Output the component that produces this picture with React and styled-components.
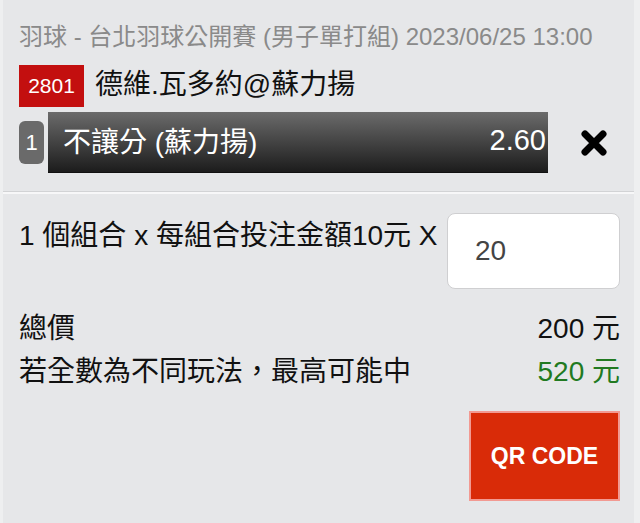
import React from "react";
import styled, { createGlobalStyle } from "styled-components";

const Global = createGlobalStyle`
  html, body {
    margin: 0;
    padding: 0;
    background: #e6e7e9;
  }
  body {
    font-family: "Liberation Sans", Arial, "Noto Sans CJK TC", sans-serif;
  }
`;

function CloseIcon() {
  return (
    <svg width="28" height="28" viewBox="0 0 28 28">
      <path
        d="M5 5 L23 23 M23 5 L5 23"
        stroke="#000"
        strokeWidth="7"
        strokeLinecap="round"
        fill="none"
      />
    </svg>
  );
}

function App() {
  return (
    <Root>
      <Global />
      <Selection>
        <Header>羽球 - 台北羽球公開賽 (男子單打組) 2023/06/25 13:00</Header>
        <MatchRow>
          <MatchNo>2801</MatchNo>
          <MatchName>德維.瓦多約@蘇力揚</MatchName>
        </MatchRow>
        <BetRow>
          <Index>1</Index>
          <BetBar>
            <BetName>不讓分 (蘇力揚)</BetName>
            <Odds>2.60</Odds>
          </BetBar>
          <Remove>
            <CloseIcon />
          </Remove>
        </BetRow>
      </Selection>
      <Summary>
        <StakeRow>
          <StakeLabel>1 個組合 x 每組合投注金額10元 X</StakeLabel>
          <StakeInput defaultValue="20" />
        </StakeRow>
        <Totals>
          <TotalRow>
            <span>總價</span>
            <Amount>200 元</Amount>
          </TotalRow>
          <TotalRow>
            <span>若全數為不同玩法，最高可能中</span>
            <Amount $win>520 元</Amount>
          </TotalRow>
        </Totals>
        <Actions>
          <QrButton>QR CODE</QrButton>
        </Actions>
      </Summary>
    </Root>
  );
}

const Root = styled.div`
  width: 640px;
  height: 523px;
  box-sizing: border-box;
  background: #e6e7e9;
  border-left: 3px solid #eeeff0;
  border-right: 6px solid #eeeff0;
  display: flex;
  flex-direction: column;
  overflow: hidden;
`;

const Selection = styled.div`
  padding: 20px 12px 0 16px;
  height: 171px;
  border-bottom: 1px solid #d2d3d5;
  box-shadow: 0 2px 0 #f7f7f8;
  display: flex;
  flex-direction: column;
`;

const Header = styled.div`
  font-size: 24px;
  line-height: 34px;
  color: #8a8a8a;
  white-space: nowrap;
`;

const MatchRow = styled.div`
  display: flex;
  align-items: center;
  margin-top: 11px;
  height: 42px;
`;

const MatchNo = styled.div`
  background: #c30f0f;
  color: #fff;
  font-size: 21px;
  height: 42px;
  width: 65px;
  display: flex;
  align-items: center;
  justify-content: center;
`;

const MatchName = styled.div`
  font-size: 28px;
  color: #111;
  margin-left: 11px;
  margin-top: -8px;
`;

const BetRow = styled.div`
  display: flex;
  align-items: center;
  margin-top: 5px;
  height: 61px;
`;

const Index = styled.div`
  width: 25px;
  height: 43px;
  border-radius: 6px;
  background: #6a6a6a;
  color: #fff;
  font-size: 22px;
  display: flex;
  align-items: center;
  justify-content: center;
`;

const BetBar = styled.div`
  margin-left: 4px;
  width: 500px;
  height: 61px;
  box-sizing: border-box;
  background: linear-gradient(#6b6b6b, #1c1c1c);
  border-bottom: 1px solid #111;
  display: flex;
  align-items: center;
  justify-content: space-between;
  padding: 0 2px 4px 15px;
  color: #fff;
  font-size: 28px;
`;

const BetName = styled.span``;

const Odds = styled.span`
  font-size: 29px;
`;

const Remove = styled.div`
  margin-left: 32px;
  display: flex;
  align-items: center;
`;

const Summary = styled.div`
  flex: 1;
  margin-top: 3px;
  padding: 18px 14px 0 16px;
  display: flex;
  flex-direction: column;
`;

const StakeRow = styled.div`
  display: flex;
  align-items: flex-start;
`;

const StakeLabel = styled.div`
  font-size: 28px;
  color: #111;
  margin-top: 0;
  white-space: nowrap;
`;

const StakeInput = styled.input`
  margin-left: auto;
  width: 173px;
  height: 76px;
  box-sizing: border-box;
  border: 1px solid #cfcfd1;
  border-radius: 8px;
  background: #fff;
  padding: 0 0 0 27px;
  font-family: "Liberation Sans", Arial, sans-serif;
  font-size: 28px;
  color: #444;
  outline: none;
`;

const Totals = styled.div`
  margin-top: 15px;
  display: flex;
  flex-direction: column;
`;

const TotalRow = styled.div`
  display: flex;
  justify-content: space-between;
  align-items: center;
  height: 43px;
  font-size: 28px;
  color: #111;
`;

const Amount = styled.span`
  color: ${(p) => (p.$win ? "#217a21" : "#111")};
`;

const Actions = styled.div`
  display: flex;
  justify-content: flex-end;
  margin-top: 21px;
`;

const QrButton = styled.button`
  width: 151px;
  height: 90px;
  box-sizing: border-box;
  background: #d92b08;
  border: 2px solid #f29a92;
  color: #fff;
  font-family: "Liberation Sans", Arial, sans-serif;
  font-weight: bold;
  font-size: 23px;
  cursor: pointer;
`;

export default App;
